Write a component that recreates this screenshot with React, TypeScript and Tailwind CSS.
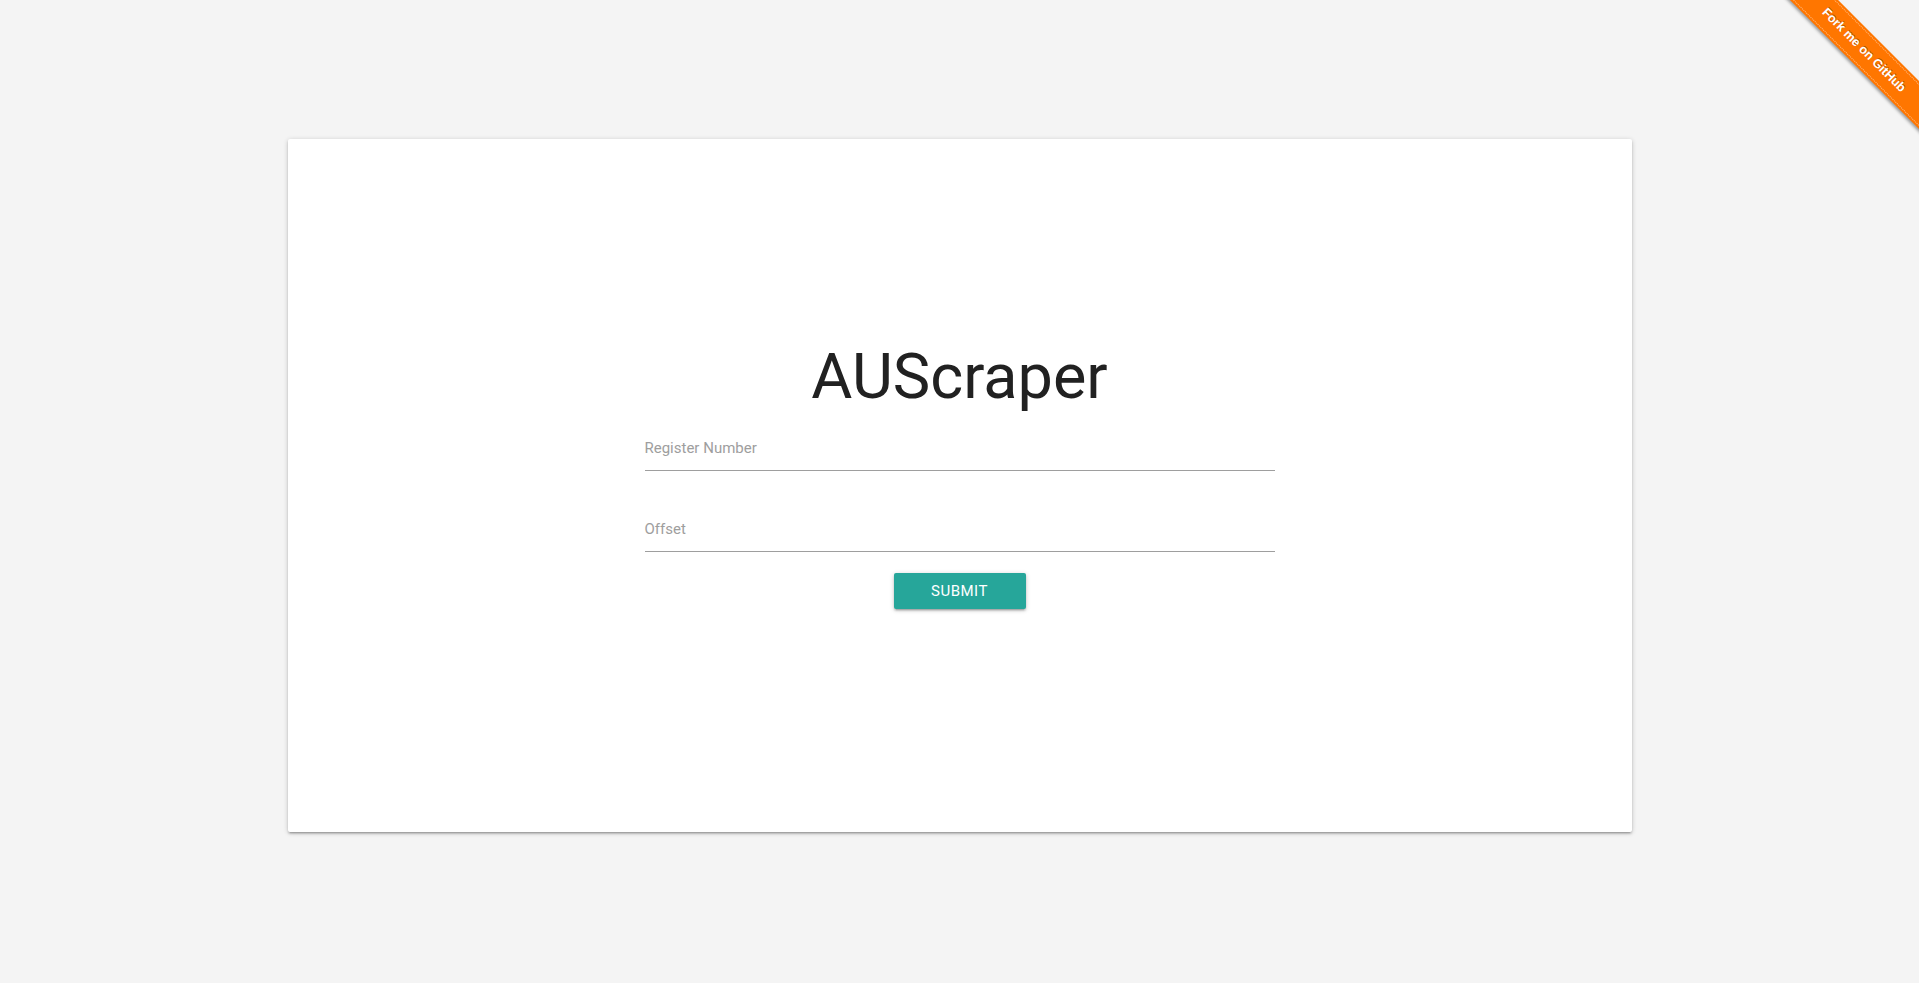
import React from "react";

function Ribbon() {
  return (
    <div className="pointer-events-none absolute right-0 top-0 h-[150px] w-[150px] overflow-hidden">
      <div className="absolute left-[-5px] top-[33px] flex h-[34px] w-[200px] rotate-45 items-center justify-center bg-[#ff7600] shadow-[0_2px_3px_0_rgba(0,0,0,0.35)]">
        <div className="absolute inset-x-0 top-[2px] border-t border-dotted border-white/50" />
        <div className="absolute inset-x-0 bottom-[2px] border-b border-dotted border-white/50" />
        <span
          className="text-[12.5px] font-bold leading-none text-white [text-shadow:0_-1px_0_rgba(0,0,0,0.35)]"
          style={{ fontFamily: '"Liberation Sans", Arial, sans-serif' }}
        >
          Fork me on GitHub
        </span>
      </div>
    </div>
  );
}

export default function App() {
  return (
    <div
      className="relative min-h-screen bg-[#f4f4f4] pt-[139px]"
      style={{ fontFamily: 'Roboto, "Noto Sans", sans-serif' }}
    >
      <Ribbon />
      <div className="mx-auto flex h-[693px] w-[1344px] flex-col items-center rounded-[2px] bg-white pt-[200px] shadow-[0_2px_2px_0_rgba(0,0,0,0.14),0_3px_1px_-2px_rgba(0,0,0,0.12),0_1px_5px_0_rgba(0,0,0,0.2)]">
        <h1 className="text-[63px] font-normal leading-[75px] text-[#212121]">AUScraper</h1>
        <div className="w-[630px] border-b border-[#9e9e9e] pb-[13px] pt-[25px]">
          <label className="block text-[15px] leading-[18px] text-[#9e9e9e]">Register Number</label>
        </div>
        <div className="mt-[49px] w-[630px] border-b border-[#9e9e9e] pb-[13px]">
          <label className="block text-[15px] leading-[18px] text-[#9e9e9e]">Offset</label>
        </div>
        <button className="mt-[21px] flex h-[36px] w-[132px] items-center justify-center rounded-[2px] bg-[#26a69a] text-[15px] uppercase tracking-[0.5px] text-white shadow-[0_2px_2px_0_rgba(0,0,0,0.14),0_3px_1px_-2px_rgba(0,0,0,0.12),0_1px_5px_0_rgba(0,0,0,0.2)]">
          Submit
        </button>
      </div>
    </div>
  );
}
